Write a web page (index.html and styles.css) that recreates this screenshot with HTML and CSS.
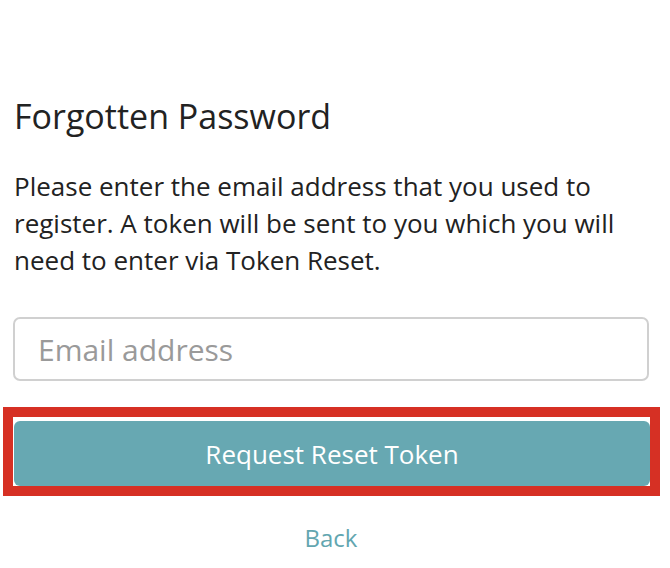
FILE: index.html
```html
<!DOCTYPE html>
<html lang="en">

<head>
    <meta charset="utf-8">
    <meta name="viewport" content="width=device-width, initial-scale=1.0">
    <title>Forgotten Password</title>
    <link rel="stylesheet" href="styles.css">
</head>

<body>
    <main class="reset">
        <h1>Forgotten Password</h1>
        <p class="intro">Please enter the email address that you used to register. A token will be sent to you which you will need to enter via Token Reset.</p>

        <form class="reset-form">
            <input type="email" class="email" placeholder="Email address">
            <div class="markering">
                <button type="button" class="knap">Request Reset Token</button>
            </div>
        </form>

        <a href="#" class="tilbage">Back</a>
    </main>
</body>

</html>
```

FILE: styles.css
```css
body {
    margin: 0;
    font-family: "Open Sans", sans-serif;
    color: #222;
    background: #fff;
}

.reset {
    padding: 96px 21px 0 13px;
}

h1 {
    margin: 0;
    padding-left: 1px;
    font-size: 34px;
    line-height: 40px;
    font-weight: 400;
}

.intro {
    max-width: 620px;
    margin: 32px 0 0;
    padding-left: 1px;
    font-size: 26px;
    line-height: 37px;
}

.reset-form {
    margin-top: 38px;
}

.email {
    display: block;
    box-sizing: border-box;
    width: 636px;
    height: 64px;
    padding: 0 23px;
    border: 2px solid #d0d0d0;
    border-radius: 7px;
    font-family: inherit;
    font-size: 30px;
    color: #333;
}

.email::placeholder {
    color: #9a9a9a;
}

.markering {
    width: 637px;
    margin: 26px 0 0 -10px;
    padding: 4px 0 0 0;
    border: 10px solid #d63024;
    background: #fff;
}

.knap {
    display: block;
    width: 636px;
    height: 65px;
    margin-left: 1px;
    border: 0;
    border-radius: 6px;
    background-color: #67a8b2;
    color: #fff;
    font-family: inherit;
    font-size: 26px;
}

.tilbage {
    display: block;
    margin-top: 27px;
    text-align: center;
    font-size: 24px;
    line-height: 30px;
    color: #62a6b0;
    text-decoration: none;
}
```
